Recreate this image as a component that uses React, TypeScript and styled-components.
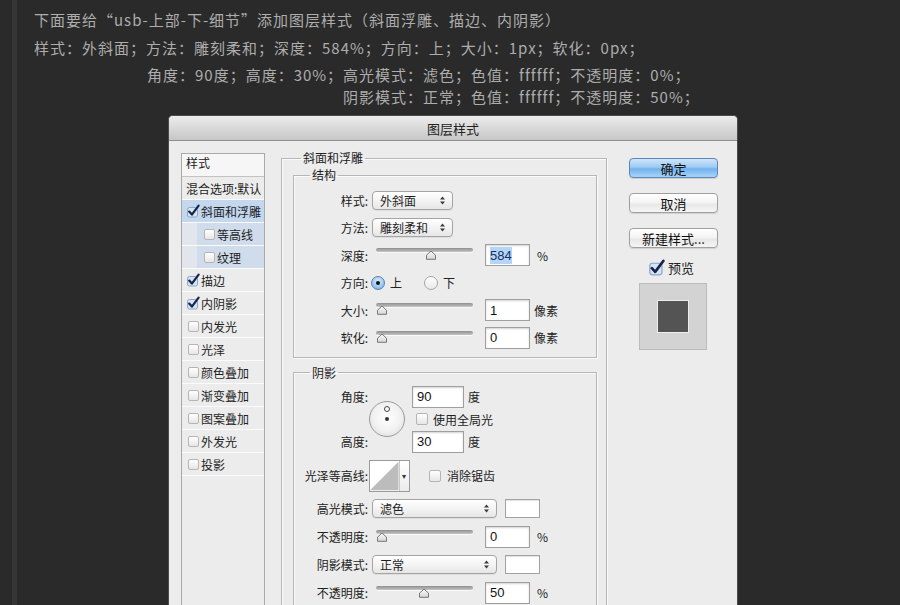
import React from 'react';
import styled, { createGlobalStyle } from 'styled-components';

const GlobalStyle = createGlobalStyle`
  html, body {
    margin: 0;
    padding: 0;
    background: #2a2a2a;
  }
  body {
    font-family: "Noto Sans CJK SC", "Noto Sans", sans-serif;
  }
`;

const Page = styled.div`
  width: 900px;
  height: 605px;
  overflow: hidden;
  display: flex;
  background: #2a2a2a;
`;

const Rail = styled.div`
  margin-left: 12px;
  width: 5px;
  flex-shrink: 0;
  background: #363636;
`;

const Content = styled.div`
  flex: 1;
  min-width: 0;
  display: flex;
  flex-direction: column;
  padding: 9px 0 0 17px;
`;

const NoteLine = styled.div<{ $indent?: number; $gap?: number }>`
  margin-left: ${(p) => p.$indent ?? 0}px;
  margin-top: ${(p) => p.$gap ?? 0}px;
  height: 22px;
  line-height: 22px;
  font-size: 15px;
  letter-spacing: 1px;
  color: #adadad;
  white-space: nowrap;
`;

const Dialog = styled.div`
  margin: 7px 0 0 134px;
  width: 570px;
  height: 500px;
  flex-shrink: 0;
  box-sizing: border-box;
  border: 1px solid #4b4b4b;
  border-bottom: none;
  border-radius: 5px 5px 0 0;
  background: #ececec;
  display: flex;
  flex-direction: column;
  overflow: hidden;
`;

const TitleBar = styled.div`
  height: 24px;
  flex-shrink: 0;
  border-bottom: 1px solid #8f8f8f;
  background: linear-gradient(#ececec, #d2d2d2 70%, #c6c6c6);
  display: flex;
  align-items: center;
  justify-content: center;
  font-size: 13px;
  color: #222;
`;

const Body = styled.div`
  flex: 1;
  display: flex;
  align-items: stretch;
  padding: 9px 0 0 12px;
`;

/* ---------- left list ---------- */

const StyleList = styled.div`
  width: 84px;
  box-sizing: border-box;
  margin-top: 3px;
  border: 1px solid #a9a9a9;
  background: #ececec;
  display: flex;
  flex-direction: column;
`;

const ListHeader = styled.div`
  height: 23px;
  box-sizing: border-box;
  padding: 1px 4px 0;
  line-height: 16px;
  font-size: 12px;
  color: #222;
  background: #f6f6f6;
  border-bottom: 1px solid #c2c2c2;
`;

const ListRow = styled.div<{ $active?: boolean; $sub?: boolean }>`
  height: 22px;
  border-bottom: 1px solid #fbfbfb;
  display: flex;
  align-items: center;
  padding-left: ${(p) => (p.$sub ? 20 : 4)}px;
  font-size: 12px;
  color: #1e1e1e;
  white-space: nowrap;
  background: ${(p) =>
    p.$active
      ? '#c3d7ef'
      : p.$sub
      ? 'linear-gradient(90deg, #e2e6ec 0 15px, #d0dcec 15px)'
      : 'transparent'};
`;

const IconSlot = styled.span`
  width: 14px;
  height: 14px;
  margin-right: 1px;
  display: flex;
  align-items: center;
  justify-content: center;
`;

const EmptyBox = styled.span<{ $size?: number }>`
  width: ${(p) => p.$size ?? 11}px;
  height: ${(p) => p.$size ?? 11}px;
  box-sizing: border-box;
  border: 1px solid #b5b5b5;
  border-radius: 2px;
  background: linear-gradient(#ffffff, #e6e6e6);
  flex-shrink: 0;
`;

const CheckMark = ({ size = 14 }: { size?: number }) => (
  <svg width={size} height={size} viewBox="0 0 14 14">
    <rect x="1.5" y="3.5" width="10" height="9.5" rx="2" fill="#d5e5f6" stroke="#8ba6c6" />
    <path
      d="M3.2 7.6 L5.9 10.6 L12.6 1.6"
      fill="none"
      stroke="#16244a"
      strokeWidth="2.2"
      strokeLinecap="round"
      strokeLinejoin="round"
    />
  </svg>
);

/* ---------- fieldsets ---------- */

const Group = styled.fieldset<{ $gap?: number }>`
  margin: ${(p) => p.$gap ?? 0}px 0 0;
  padding: 0;
  min-width: 0;
  box-sizing: border-box;
  border: 1px solid #b7b7b7;
  box-shadow: inset 1px 1px 0 #fafafa, 1px 1px 0 #fafafa;
`;

const OuterGroup = styled(Group)`
  width: 326px;
  margin-left: 16px;
  padding: 0 9px 0 11px;
`;

const InnerGroup = styled(Group)<{ $pad?: number }>`
  width: 304px;
  padding-bottom: ${(p) => p.$pad ?? 0}px;
`;

const Legend = styled.legend<{ $offset?: number }>`
  margin-left: ${(p) => p.$offset ?? 8}px;
  padding: 0 2px;
  font-size: 12px;
  line-height: 16px;
  color: #222;
`;

const Rows = styled.div<{ $top?: number; $gap?: number }>`
  display: flex;
  flex-direction: column;
  padding-top: ${(p) => p.$top ?? 0}px;
  gap: ${(p) => p.$gap ?? 6}px;
`;

const Row = styled.div<{ $h?: number }>`
  height: ${(p) => p.$h ?? 22}px;
  display: flex;
  align-items: center;
`;

const Label = styled.span`
  width: 74px;
  flex-shrink: 0;
  text-align: right;
  font-size: 12px;
  color: #222;
  white-space: nowrap;
`;

const Unit = styled.span<{ $gap?: number }>`
  margin-left: ${(p) => p.$gap ?? 7}px;
  font-size: 12px;
  color: #222;
`;

const Text = styled.span<{ $gap?: number }>`
  margin-left: ${(p) => p.$gap ?? 5}px;
  font-size: 12px;
  color: #222;
  white-space: nowrap;
`;

/* ---------- controls ---------- */

const Select = styled.div<{ $w: number }>`
  width: ${(p) => p.$w}px;
  height: 19px;
  margin-left: 4px;
  box-sizing: border-box;
  border: 1px solid #a4a4a4;
  border-radius: 4px;
  background: linear-gradient(#ffffff, #f1f1f1 60%, #e6e6e6);
  box-shadow: 0 1px 0 rgba(0, 0, 0, 0.06);
  display: flex;
  align-items: center;
  justify-content: space-between;
  padding: 0 7px 0 7px;
  font-size: 12px;
  color: #1e1e1e;
`;

const UpDown = () => (
  <svg width="5" height="9" viewBox="0 0 5 9">
    <path d="M0 3.6 L2.5 0.4 L5 3.6 Z M0 5.4 L2.5 8.6 L5 5.4 Z" fill="#3a3a3a" />
  </svg>
);

const NumberBox = styled.div<{ $w?: number; $gap?: number }>`
  width: ${(p) => p.$w ?? 45}px;
  height: 22px;
  margin-left: ${(p) => p.$gap ?? 7}px;
  box-sizing: border-box;
  border: 1px solid #9f9f9f;
  background: #fff;
  box-shadow: inset 0 1px 2px rgba(0, 0, 0, 0.18);
  display: flex;
  align-items: center;
  padding-left: 4px;
  font-family: "Liberation Sans", Arial, sans-serif;
  font-size: 13px;
  color: #111;
  flex-shrink: 0;
`;

const Selected = styled.span`
  background: #b4d4f8;
  color: #15305c;
  padding: 1px 0;
`;

const SliderBox = styled.div`
  position: relative;
  width: 106px;
  height: 22px;
  margin-left: 4px;
  flex-shrink: 0;
`;

const Track = styled.div`
  position: absolute;
  left: 4px;
  right: 5px;
  top: 4px;
  height: 4px;
  border-radius: 2px;
  background: linear-gradient(#8f8f8f, #c4c4c4);
  box-shadow: 0 1px 0 #fafafa;
`;

const Thumb = styled.svg`
  position: absolute;
  top: 6px;
`;

const Slider = ({ value, max }: { value: number; max: number }) => (
  <SliderBox>
    <Track />
    <Thumb width="12" height="10" viewBox="0 0 12 10" style={{ left: 4 + (value / max) * 84 }}>
      <defs>
        <linearGradient id="thumbFill" x1="0" y1="0" x2="0" y2="1">
          <stop offset="0" stopColor="#fbfbfb" />
          <stop offset="1" stopColor="#d6d6d6" />
        </linearGradient>
      </defs>
      <path d="M1.5 9.3 V5.2 L6 1 L10.5 5.2 V9.3 Z" fill="url(#thumbFill)" stroke="#767676" strokeLinejoin="round" />
    </Thumb>
  </SliderBox>
);

const Radio = styled.span<{ $on?: boolean; $gap?: number }>`
  width: 14px;
  height: 14px;
  margin-left: ${(p) => p.$gap ?? 0}px;
  box-sizing: border-box;
  border-radius: 50%;
  border: 1px solid ${(p) => (p.$on ? '#5e80aa' : '#a6a6a6')};
  background: ${(p) =>
    p.$on
      ? 'radial-gradient(circle at 50% 35%, #dcecfb, #8ec0ee 70%, #6aa5e0)'
      : 'linear-gradient(#ffffff, #e9e9e9)'};
  display: flex;
  align-items: center;
  justify-content: center;
  flex-shrink: 0;
  &::after {
    content: '';
    width: 4px;
    height: 4px;
    border-radius: 50%;
    background: #111;
    display: ${(p) => (p.$on ? 'block' : 'none')};
  }
`;

const Swatch = styled.div`
  width: 35px;
  height: 19px;
  margin-left: 8px;
  box-sizing: border-box;
  border: 1px solid #a2a2a2;
  background: #fff;
  box-shadow: inset 0 1px 1px rgba(0, 0, 0, 0.12);
`;

/* ---------- angle block ---------- */

const AngleBlock = styled.div`
  margin-top: 5px;
  height: 67px;
  display: flex;
  align-items: stretch;
`;

const AngleLabels = styled.div`
  width: 74px;
  display: flex;
  flex-direction: column;
  justify-content: space-between;
`;

const LabelCell = styled(Label)`
  height: 22px;
  line-height: 22px;
  display: block;
`;

const Dial = styled.div`
  position: relative;
  width: 36px;
  height: 36px;
  margin-left: 1px;
  align-self: center;
  box-sizing: border-box;
  border-radius: 50%;
  border: 1px solid #9a9a9a;
  background: radial-gradient(circle at 50% 45%, #ffffff, #f1f1f1 55%, #d6d6d6);
  &::after {
    content: '';
    position: absolute;
    left: 15px;
    top: 15px;
    width: 4px;
    height: 4px;
    border-radius: 50%;
    background: #333;
  }
`;

const DialMarker = styled.span`
  position: absolute;
  left: 14px;
  top: 4px;
  width: 6px;
  height: 6px;
  box-sizing: border-box;
  border-radius: 50%;
  border: 1px solid #444;
  background: #fff;
`;

const AngleControls = styled.div`
  margin-left: 7px;
  display: flex;
  flex-direction: column;
`;

const ControlLine = styled.div<{ $h?: number }>`
  height: ${(p) => p.$h ?? 22}px;
  display: flex;
  align-items: center;
`;

const ContourBox = styled.div`
  width: 41px;
  height: 32px;
  margin-left: 1px;
  box-sizing: border-box;
  border: 1px solid #9a9a9a;
  background: #fff;
  display: flex;
`;

const ContourArrow = styled.div`
  width: 10px;
  border-left: 1px solid #c8c8c8;
  background: linear-gradient(#ffffff, #ececec);
  display: flex;
  align-items: center;
  justify-content: center;
  font-size: 8px;
  color: #333;
`;

/* ---------- right column ---------- */

const SideColumn = styled.div`
  margin-left: 22px;
  padding-top: 8px;
  width: 89px;
  display: flex;
  flex-direction: column;
`;

const Button = styled.div<{ $primary?: boolean }>`
  height: 20px;
  margin-bottom: 15px;
  box-sizing: border-box;
  border-radius: 4px;
  border: 1px solid ${(p) => (p.$primary ? '#5f86b8' : '#a0a0a0')};
  background: ${(p) =>
    p.$primary
      ? 'linear-gradient(#cfe5fa, #9ccbf4 45%, #73b3ee 55%, #a9d3f7)'
      : 'linear-gradient(#ffffff, #f3f3f3 50%, #e7e7e7 55%, #f5f5f5)'};
  box-shadow: 0 1px 1px rgba(0, 0, 0, 0.12);
  display: flex;
  align-items: center;
  justify-content: center;
  font-size: 13px;
  color: #111;
  white-space: nowrap;
`;

const PreviewToggle = styled.div`
  margin-top: -4px;
  padding-left: 19px;
  height: 16px;
  display: flex;
  align-items: center;
  font-size: 13px;
  color: #111;
`;

const PreviewBox = styled.div`
  margin: 8px 0 0 10px;
  width: 68px;
  height: 67px;
  box-sizing: border-box;
  border: 1px solid #bcbcbc;
  background: #d3d3d3;
  display: flex;
  align-items: center;
  justify-content: center;
`;

const PreviewSwatch = styled.div`
  width: 32px;
  height: 33px;
  box-sizing: border-box;
  border: 1px solid #ededed;
  background: #545454;
`;

const layers = [
  { name: '斜面和浮雕', checked: true, active: true },
  { name: '等高线', sub: true },
  { name: '纹理', sub: true },
  { name: '描边', checked: true },
  { name: '内阴影', checked: true },
  { name: '内发光' },
  { name: '光泽' },
  { name: '颜色叠加' },
  { name: '渐变叠加' },
  { name: '图案叠加' },
  { name: '外发光' },
  { name: '投影' },
];

const App: React.FC = () => {
  return (
    <Page>
      <GlobalStyle />
      <Rail />
      <Content>
        <NoteLine>下面要给“usb-上部-下-细节”添加图层样式（斜面浮雕、描边、内阴影）</NoteLine>
        <NoteLine $gap={6}>样式：外斜面；方法：雕刻柔和；深度：584%；方向：上；大小：1px；软化：0px；</NoteLine>
        <NoteLine $gap={5} $indent={113}>
          角度：90度；高度：30%；高光模式：滤色；色值：ffffff；不透明度：0%；
        </NoteLine>
        <NoteLine $indent={309}>阴影模式：正常；色值：ffffff；不透明度：50%；</NoteLine>

        <Dialog>
          <TitleBar>图层样式</TitleBar>
          <Body>
            <StyleList>
              <ListHeader>样式</ListHeader>
              <ListRow>混合选项:默认</ListRow>
              {layers.map((layer) => (
                <ListRow key={layer.name} $active={layer.active} $sub={layer.sub}>
                  <IconSlot>{layer.checked ? <CheckMark /> : <EmptyBox />}</IconSlot>
                  {layer.name}
                </ListRow>
              ))}
            </StyleList>

            <OuterGroup>
              <Legend>斜面和浮雕</Legend>
              <InnerGroup $gap={1} $pad={8}>
                <Legend $offset={16}>结构</Legend>
                <Rows $top={6} $gap={5.6}>
                  <Row>
                    <Label>样式:</Label>
                    <Select $w={81}>
                      外斜面
                      <UpDown />
                    </Select>
                  </Row>
                  <Row>
                    <Label>方法:</Label>
                    <Select $w={81}>
                      雕刻柔和
                      <UpDown />
                    </Select>
                  </Row>
                  <Row>
                    <Label>深度:</Label>
                    <Slider value={584} max={1000} />
                    <NumberBox>
                      <Selected>584</Selected>
                    </NumberBox>
                    <Unit>%</Unit>
                  </Row>
                  <Row>
                    <Label>方向:</Label>
                    <Radio $on $gap={3} />
                    <Text $gap={5}>上</Text>
                    <Radio $gap={22} />
                    <Text $gap={5}>下</Text>
                  </Row>
                  <Row>
                    <Label>大小:</Label>
                    <Slider value={0} max={100} />
                    <NumberBox>1</NumberBox>
                    <Unit $gap={4}>像素</Unit>
                  </Row>
                  <Row>
                    <Label>软化:</Label>
                    <Slider value={0} max={100} />
                    <NumberBox>0</NumberBox>
                    <Unit $gap={4}>像素</Unit>
                  </Row>
                </Rows>
              </InnerGroup>

              <InnerGroup $gap={7} $pad={20}>
                <Legend $offset={16}>阴影</Legend>
                <AngleBlock>
                  <AngleLabels>
                    <LabelCell>角度:</LabelCell>
                    <LabelCell>高度:</LabelCell>
                  </AngleLabels>
                  <Dial>
                    <DialMarker />
                  </Dial>
                  <AngleControls>
                    <ControlLine>
                      <NumberBox $w={52} $gap={0}>
                        90
                      </NumberBox>
                      <Unit $gap={4}>度</Unit>
                    </ControlLine>
                    <ControlLine $h={23}>
                      <EmptyBox $size={12} style={{ marginLeft: 4 }} />
                      <Text>使用全局光</Text>
                    </ControlLine>
                    <ControlLine>
                      <NumberBox $w={52} $gap={0}>
                        30
                      </NumberBox>
                      <Unit $gap={4}>度</Unit>
                    </ControlLine>
                  </AngleControls>
                </AngleBlock>

                <Rows $top={7} $gap={6}>
                  <Row $h={32}>
                    <Label>光泽等高线:</Label>
                    <ContourBox>
                      <svg width="30" height="30" viewBox="0 0 30 30">
                        <polygon points="0,30 30,0 30,30" fill="#bcbcbc" />
                      </svg>
                      <ContourArrow>▾</ContourArrow>
                    </ContourBox>
                    <EmptyBox $size={12} style={{ marginLeft: 19 }} />
                    <Text $gap={6}>消除锯齿</Text>
                  </Row>
                  <Row>
                    <Label>高光模式:</Label>
                    <Select $w={125}>
                      滤色
                      <UpDown />
                    </Select>
                    <Swatch />
                  </Row>
                  <Row>
                    <Label>不透明度:</Label>
                    <Slider value={0} max={100} />
                    <NumberBox>0</NumberBox>
                    <Unit>%</Unit>
                  </Row>
                  <Row>
                    <Label>阴影模式:</Label>
                    <Select $w={125}>
                      正常
                      <UpDown />
                    </Select>
                    <Swatch />
                  </Row>
                  <Row>
                    <Label>不透明度:</Label>
                    <Slider value={50} max={100} />
                    <NumberBox>50</NumberBox>
                    <Unit>%</Unit>
                  </Row>
                </Rows>
              </InnerGroup>
            </OuterGroup>

            <SideColumn>
              <Button $primary>确定</Button>
              <Button>取消</Button>
              <Button>新建样式...</Button>
              <PreviewToggle>
                <CheckMark size={17} />
                <Text $gap={3} style={{ fontSize: 13 }}>
                  预览
                </Text>
              </PreviewToggle>
              <PreviewBox>
                <PreviewSwatch />
              </PreviewBox>
            </SideColumn>
          </Body>
        </Dialog>
      </Content>
    </Page>
  );
};

export default App;
